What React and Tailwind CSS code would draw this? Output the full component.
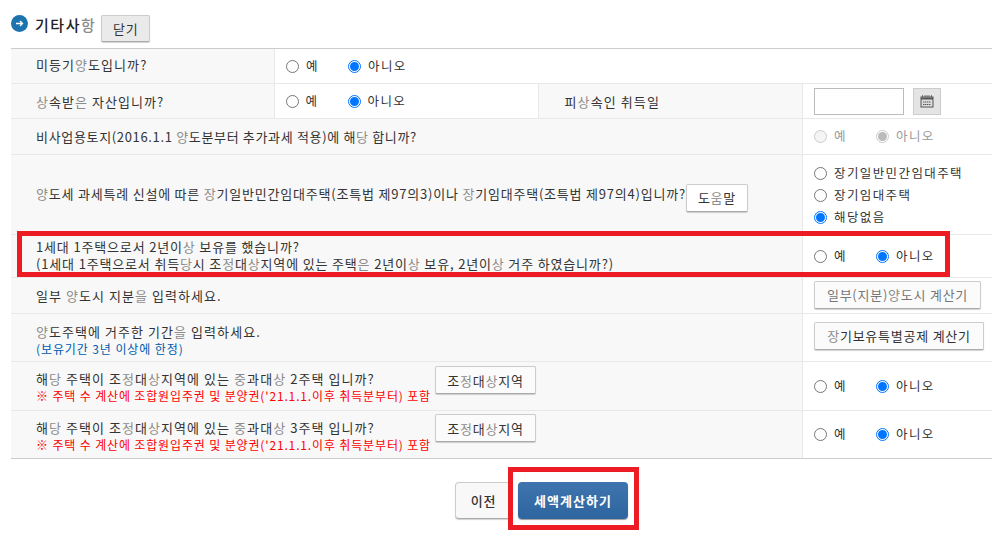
const FONT = "font-['Noto_Sans_CJK_KR','Noto_Sans',sans-serif]";
const FADED = "양상당항장을은중정움";

function Txt({ s }) {
  return (
    <span>
      {[...s].map((c, i) =>
        FADED.includes(c) ? (
          <span key={i} className="text-[#8c8c8c]">{c}</span>
        ) : (
          c
        )
      )}
    </span>
  );
}

function Radio({ on, off, label }) {
  if (on) {
    return (
      <span className={`flex items-center gap-[7px] ${off ? "text-[#999]" : "text-[#333]"}`}>
        <span className={`flex h-[13px] w-[13px] items-center justify-center rounded-full border ${off ? "border-[#ccc]" : "border-[#0075ff]"}`}>
          <span className={`h-[9px] w-[9px] rounded-full ${off ? "bg-[#bbb]" : "bg-[#0075ff]"}`} />
        </span>
        {label}
      </span>
    );
  }
  return (
    <span className={`flex items-center gap-[7px] ${off ? "text-[#999]" : "text-[#333]"}`}>
      <span className={`h-[13px] w-[13px] rounded-full border ${off ? "border-[#ccc] bg-[#f4f4f4]" : "border-[#767676] bg-white"}`} />
      {label}
    </span>
  );
}

function YesNo({ off }) {
  return (
    <div className="flex items-center text-[12.5px] tracking-[1.4px]">
      <div className="w-[62px]">
        <Radio off={off} label="예" />
      </div>
      <Radio on off={off} label="아니오" />
    </div>
  );
}

function Btn({ children, className = "" }) {
  return (
    <button className={`flex shrink-0 items-center justify-center whitespace-nowrap rounded-[2px] border border-[#ccc] border-b-[#aaa] bg-[#fbfbfb] text-[13px] tracking-[0.75px] text-[#333] shadow-[0_1px_1px_rgba(0,0,0,0.18)] ${className}`}>
      {children}
    </button>
  );
}

function Label({ children, stack, className = "" }) {
  return (
    <div className={`flex min-w-0 flex-1 bg-[#f8f8f8] pl-[25px] text-[13px] leading-[17px] text-[#333] ${stack ? "flex-col justify-center whitespace-nowrap" : "items-center"} ${className}`}>
      {children}
    </div>
  );
}

function Side({ children, className = "" }) {
  return (
    <div className={`flex w-[190px] shrink-0 border-l border-[#e8e8e8] bg-white pl-[11px] ${className}`}>
      {children}
    </div>
  );
}

function Row({ h, children, last }) {
  return (
    <div className={`flex border-b ${last ? "border-[#ccc]" : "border-[#e8e8e8]"} ${h}`}>{children}</div>
  );
}

function Notice({ n }) {
  return (
    <Row h={n === 2 ? "h-[49px]" : "h-[48px]"} last={n === 3}>
      <Label className="!items-start">
        <div className="w-[399px] shrink-0 pt-[9px] leading-[16px]">
          <div className="tracking-[1.05px]"><Txt s={`해당 주택이 조정대상지역에 있는 중과대상 ${n}주택 입니까?`} /></div>
          <div className="mt-[1px] whitespace-nowrap text-[12px] tracking-[0.85px] text-[#f00]">※ 주택 수 계산에 조합원입주권 및 분양권('21.1.1.이후 취득분부터) 포함</div>
        </div>
        <Btn className={`h-[28px] w-[101px] ${n === 2 ? "mt-[4px]" : "mt-[3px]"}`}><Txt s="조정대상지역" /></Btn>
      </Label>
      <Side className="items-center"><YesNo /></Side>
    </Row>
  );
}

export default function App() {
  return (
    <div className={`relative h-[537px] w-[992px] overflow-hidden bg-white ${FONT}`}>
      <div className="flex h-[48px] items-start pl-[11px] pt-[15px]">
        <span className="flex h-[17px] w-[17px] items-center justify-center rounded-full bg-[#1b74ae]">
          <svg width="9" height="9" viewBox="0 0 9 9" fill="none" stroke="#fff" strokeWidth="1.3">
            <path d="M1 4.5h6.5M5 2l2.5 2.5L5 7" />
          </svg>
        </span>
        <span className="ml-[7px] text-[15px] font-medium leading-[19px] tracking-[1.5px] text-[#222]"><Txt s="기타사항" /></span>
        <Btn className="ml-[5px] h-[27px] w-[49px] !bg-[#eaeaea]">닫기</Btn>
      </div>

      <div className="ml-[11px] border-t-[1px] border-[#ccc]">
        <Row h="h-[35px]">
          <Label className="max-w-[263px] pb-[3px] tracking-[1.05px]"><Txt s="미등기양도입니까?" /></Label>
          <div className="flex flex-1 items-center border-l border-[#e8e8e8] pl-[11px]"><YesNo /></div>
        </Row>
        <Row h="h-[35px]">
          <Label className="max-w-[263px] tracking-[1.05px]"><Txt s="상속받은 자산입니까?" /></Label>
          <div className="flex w-[264px] items-center border-l border-[#e8e8e8] pl-[11px]"><YesNo /></div>
          <Label className="border-l border-[#e8e8e8] !pl-[26px] tracking-[1.1px]"><Txt s="피상속인 취득일" /></Label>
          <Side className="items-center">
            <input className="h-[27px] w-[90px] border border-[#bbb] bg-white" />
            <button className="ml-[9px] flex h-[27px] w-[28px] items-center justify-center border border-[#ccc] bg-[#e4e4e4]">
              <svg width="14" height="14" viewBox="0 0 14 14" fill="none" stroke="#555">
                <path d="M2.5 1v2M5 1v2M7 1v2M9 1v2M11.5 1v2" strokeWidth="0.8" />
                <rect x="1" y="3" width="12" height="10" fill="#ddd" />
                <path d="M1 4.5h12" strokeWidth="2" />
                <path d="M3 8h8M3 10.5h8" strokeWidth="1.2" strokeDasharray="1.4 .6" />
              </svg>
            </button>
          </Side>
        </Row>
        <Row h="h-[36px]">
          <Label className="tracking-[0.65px]"><Txt s="비사업용토지(2016.1.1 양도분부터 추가과세 적용)에 해당 합니까?" /></Label>
          <Side className="items-center"><YesNo off /></Side>
        </Row>
        <Row h="h-[80px]">
          <Label className="pb-[2px] tracking-[0.79px]">
            <span className="whitespace-nowrap"><Txt s="양도세 과세특례 신설에 따른 장기일반민간임대주택(조특법 제97의3)이나 장기임대주택(조특법 제97의4)입니까?" /></span>
            <Btn className="mt-[8px] h-[28px] w-[62px] !bg-white"><Txt s="도움말" /></Btn>
          </Label>
          <Side className="flex-col justify-center gap-[4px] pt-[1px] text-[12.5px] leading-[18px] tracking-[1.4px]">
            <Radio label="장기일반민간임대주택" />
            <Radio label="장기임대주택" />
            <Radio on label="해당없음" />
          </Side>
        </Row>
        <Row h="h-[43px]">
          <Label stack className="pb-[2px] tracking-[0.83px]">
            <div><Txt s="1세대 1주택으로서 2년이상 보유를 했습니까?" /></div>
            <div><Txt s="(1세대 1주택으로서 취득당시 조정대상지역에 있는 주택은 2년이상 보유, 2년이상 거주 하였습니까?)" /></div>
          </Label>
          <Side className="items-center"><YesNo /></Side>
        </Row>
        <Row h="h-[36px]">
          <Label className="tracking-[1.05px]"><Txt s="일부 양도시 지분을 입력하세요." /></Label>
          <Side className="items-center"><Btn className="mb-[2px] h-[28px] w-[167px] !text-[#777]"><Txt s="일부(지분)양도시 계산기" /></Btn></Side>
        </Row>
        <Row h="h-[48px]">
          <Label stack className="pt-[4px] leading-[16px] tracking-[1.05px]">
            <div><Txt s="양도주택에 거주한 기간을 입력하세요." /></div>
            <div className="text-[12px] tracking-[0.9px] text-[#005bac]">(보유기간 3년 이상에 한정)</div>
          </Label>
          <Side className="items-center"><Btn className="mb-[4px] h-[28px] w-[170px]"><Txt s="장기보유특별공제 계산기" /></Btn></Side>
        </Row>
        <Notice n={2} />
        <Notice n={3} />
      </div>

      <div className="mt-[23px] flex gap-[6px] pl-[455px]">
        <Btn className="h-[37px] w-[57px] !rounded-[4px] !bg-[#f8f8f8] font-medium">이전</Btn>
        <button className="h-[37px] w-[110px] rounded-[4px] bg-gradient-to-b from-[#3f75ae] to-[#2f659f] text-[13px] font-bold tracking-[1px] text-white shadow-[0_1px_1px_rgba(0,0,0,0.4)]">세액계산하기</button>
      </div>

      <div className="absolute left-[17px] top-[231px] h-[46px] w-[933px] border-[5px] border-[#ed1c24]" />
      <div className="absolute left-[508px] top-[467px] h-[63px] w-[131px] border-[5px] border-[#ed1c24]" />
    </div>
  );
}
